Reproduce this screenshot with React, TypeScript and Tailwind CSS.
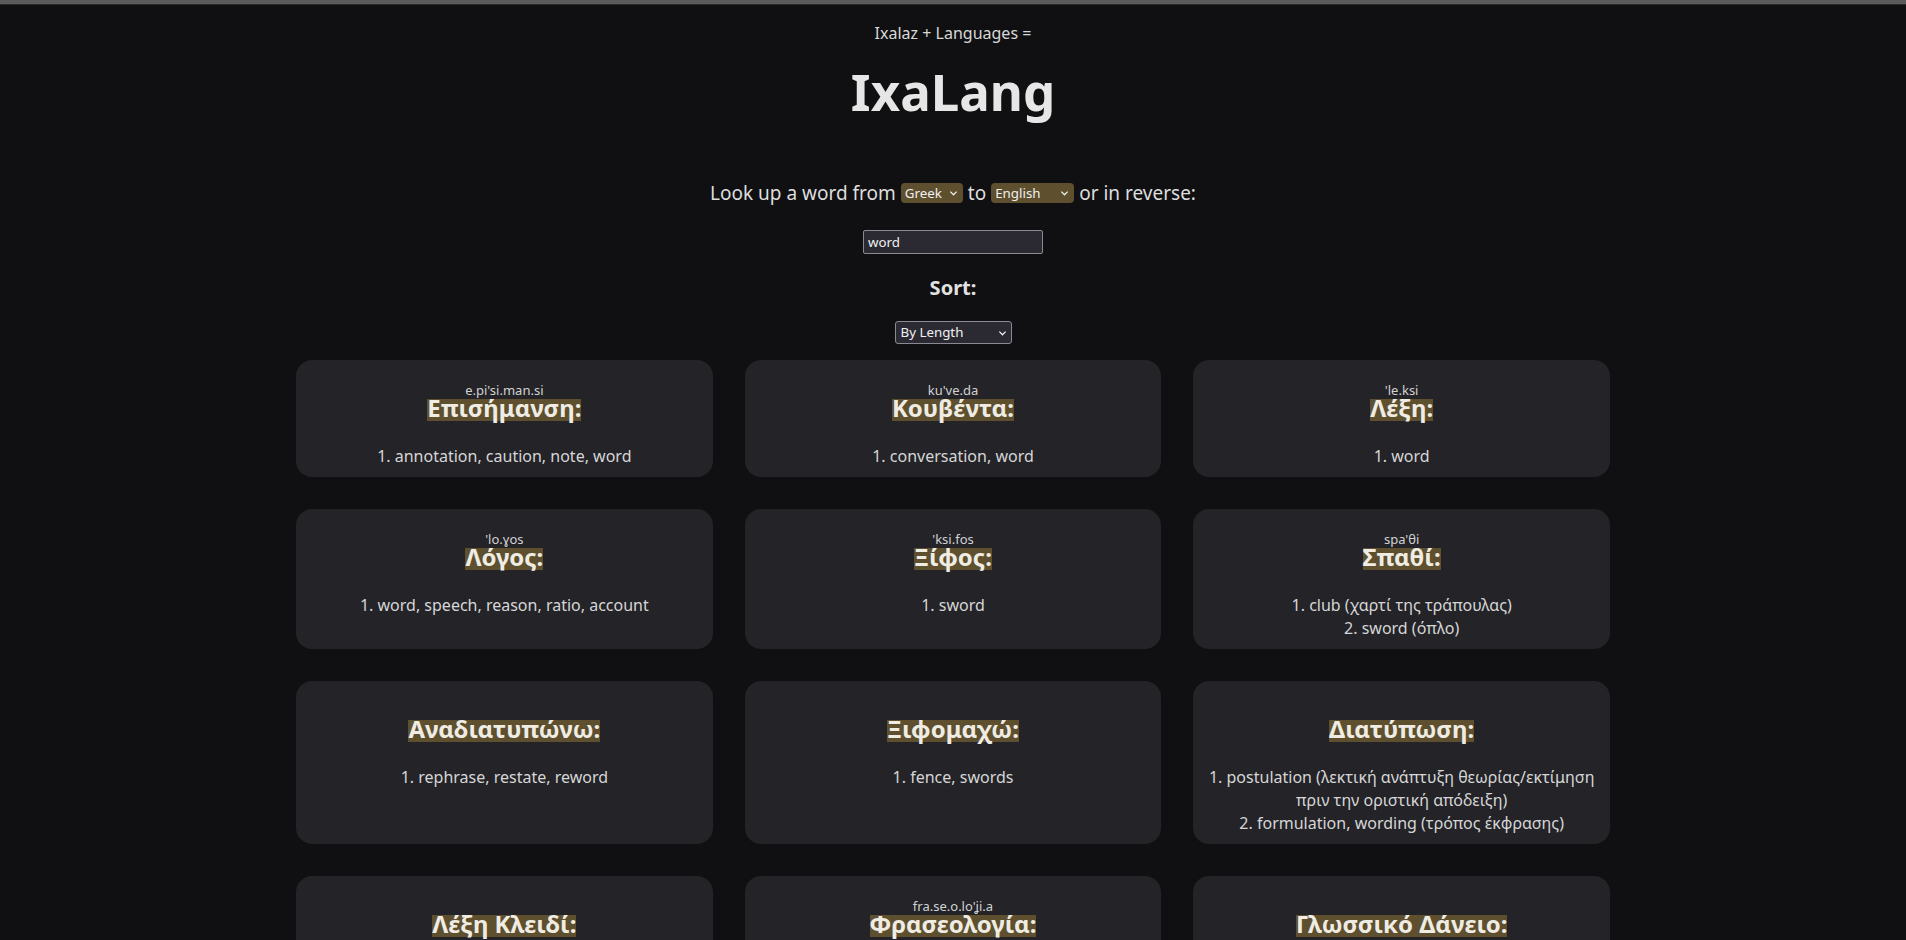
import { useState } from "react"

type Entry = {
    ipa?: string
    word: string
    defs: string[]
}

const entries: Entry[] = [
    { ipa: "e.pi'si.man.si", word: "Επισήμανση", defs: ["annotation, caution, note, word"] },
    { ipa: "ku've.da", word: "Κουβέντα", defs: ["conversation, word"] },
    { ipa: "'le.ksi", word: "Λέξη", defs: ["word"] },
    { ipa: "'lo.ɣos", word: "Λόγος", defs: ["word, speech, reason, ratio, account"] },
    { ipa: "'ksi.fos", word: "Ξίφος", defs: ["sword"] },
    { ipa: "spa'θi", word: "Σπαθί", defs: ["club (χαρτί της τράπουλας)", "sword (όπλο)"] },
    { word: "Αναδιατυπώνω", defs: ["rephrase, restate, reword"] },
    { word: "Ξιφομαχώ", defs: ["fence, swords"] },
    {
        word: "Διατύπωση",
        defs: [
            "postulation (λεκτική ανάπτυξη θεωρίας/εκτίμηση πριν την οριστική απόδειξη)",
            "formulation, wording (τρόπος έκφρασης)",
        ],
    },
    { word: "Λέξη Κλειδί", defs: ["keyword"] },
    { ipa: "fra.se.o.lo'ʝi.a", word: "Φρασεολογία", defs: ["phraseology, wording"] },
    { word: "Γλωσσικό Δάνειο", defs: ["loanword"] },
]

function Chevron() {
    return (
        <svg
            viewBox="0 0 10 10"
            className="pointer-events-none absolute right-[5px] top-1/2 h-[9px] w-[9px] -translate-y-1/2"
            fill="none"
            stroke="currentColor"
            strokeWidth="1.4"
        >
            <path d="M1.5 3.5 L5 7 L8.5 3.5" />
        </svg>
    )
}

function LangSelect({ value, options, width }: { value: string; options: string[]; width: string }) {
    return (
        <span className={`relative inline-flex h-[20px] ${width} text-[#f0f0f0]`}>
            <select
                defaultValue={value}
                className="h-full w-full appearance-none rounded-[4px] bg-[#5e4f2e] pl-[4px] text-[13.33px] leading-[20px] text-[#f0f0f0] outline-none"
            >
                {options.map((o) => (
                    <option key={o}>{o}</option>
                ))}
            </select>
            <Chevron />
        </span>
    )
}

function Card({ entry }: { entry: Entry }) {
    return (
        <div className="flex flex-col items-center rounded-[16px] bg-[#232328] px-3 pt-[21px] pb-[9px] text-center">
            <div className="h-[18px] text-[13px] leading-[18px] text-[#d2d2d2]">{entry.ipa ?? ""}</div>
            <h2 className="h-[22px]">
                {/* highlight sits a bit low under the glyphs, like in the original */}
                <span className="inline-block bg-[#5e4f2e] pb-[5px] text-[24px] font-bold leading-[17px] text-[#efece4]">
                    {entry.word}:
                </span>
            </h2>
            <ol className="mt-[24px] text-[16px] leading-[23px] text-[#d6d6d6]">
                {entry.defs.map((d, i) => (
                    <li key={i}>
                        {i + 1}. {d}
                    </li>
                ))}
            </ol>
        </div>
    )
}

export default function App() {
    const [query, setQuery] = useState("word")

    return (
        <div className="min-h-screen bg-[#101012] font-['Noto_Sans',sans-serif] text-[#dcdcdc]">
            {/* top strip */}
            <div className="h-[5px] border-b border-[#2a2a2a] bg-[#5b5b5b]" />

            <header className="flex flex-col items-center">
                <p className="mt-[16px] text-[16px] leading-6 text-[#d8d8d8]">Ixalaz + Languages =</p>
                <h1 className="mt-[15px] text-[51px] font-bold leading-[62px] text-[#e6e6e6]">IxaLang</h1>
            </header>

            <section className="mt-[56px] flex flex-col items-center">
                <div className="flex h-[30px] items-center gap-[5px] text-[19px] text-[#dedede]">
                    <span>Look up a word from</span>
                    <LangSelect value="Greek" options={["Greek", "English"]} width="w-[62px]" />
                    <span>to</span>
                    <LangSelect value="English" options={["English", "Greek"]} width="w-[83px]" />
                    <span>or in reverse:</span>
                </div>

                <input
                    value={query}
                    onChange={(e) => setQuery(e.target.value)}
                    className="mt-[22px] h-[24px] w-[180px] rounded-[2px] border border-[#8a8a92] bg-[#2b2a33] px-[4px] text-[13.33px] text-[#f0f0f0] outline-none"
                />

                <h3 className="mt-[19px] text-[20px] font-bold leading-[30px] text-[#e2e2e2]">Sort:</h3>

                <span className="relative mt-[18px] inline-flex h-[23px] w-[117px] text-[#f0f0f0]">
                    <select
                        defaultValue="length"
                        className="h-full w-full appearance-none rounded-[3px] border border-[#8a8a92] bg-[#2b2a33] pl-[5px] text-[13.33px] text-[#f0f0f0] outline-none"
                    >
                        <option value="length">By Length</option>
                        <option value="alpha">Alphabetical</option>
                    </select>
                    <Chevron />
                </span>
            </section>

            <main className="mx-auto mt-[16px] grid w-[1314px] grid-cols-3 gap-x-8 gap-y-[32px] pb-10">
                {entries.map((e) => (
                    <Card key={e.word} entry={e} />
                ))}
            </main>
        </div>
    )
}
